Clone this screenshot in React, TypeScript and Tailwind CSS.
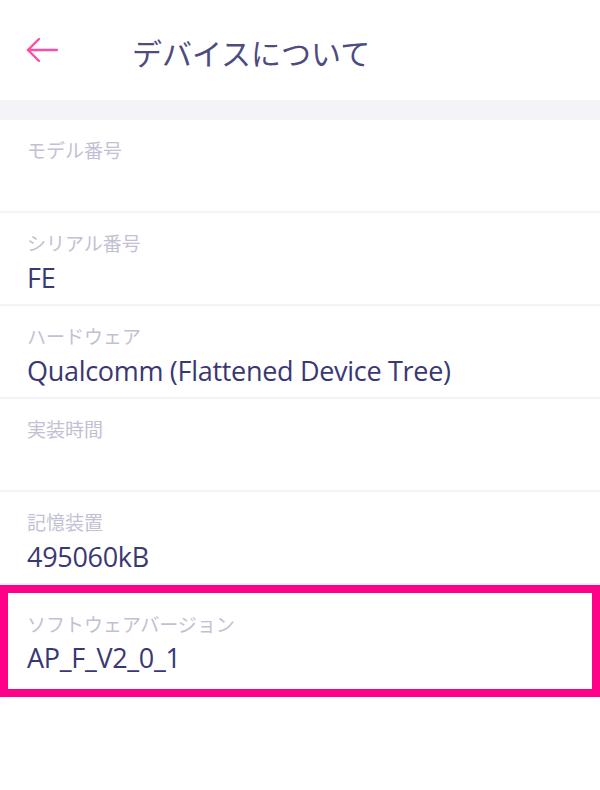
const rows = [
  { label: "モデル番号", value: "" },
  { label: "シリアル番号", value: "FE" },
  { label: "ハードウェア", value: "Qualcomm (Flattened Device Tree)" },
  { label: "実装時間", value: "" },
  { label: "記憶装置", value: "495060kB" },
];

const jp = { fontFamily: '"Noto Sans CJK JP", "Noto Sans", sans-serif' };
const latin = { fontFamily: '"Open Sans", "Noto Sans CJK JP", sans-serif' };

const Row = ({ label, value }: { label: string; value: string }) => (
  <div className="px-[27px] pt-[18px]">
    <div className="text-[19px] leading-6 text-[#c2c1d3]" style={jp}>
      {label}
    </div>
    <div className="mt-[7px] h-8 text-[27px] leading-8 font-medium text-[#3a3873] tracking-[-0.3px]" style={latin}>
      {value}
    </div>
  </div>
);

export default function App() {
  return (
    <div className="w-[600px] h-[790px] bg-white overflow-hidden">
      <header className="h-[100px] flex items-center">
        <div className="w-[132px] pl-[26px] flex items-center">
          <svg width="32" height="28" viewBox="0 0 32 28" fill="none" stroke="#ff4da6" strokeWidth="2.4" strokeLinecap="round" strokeLinejoin="round">
            <path d="M2 14H31" />
            <path d="M13 3L2 14L13 25" />
          </svg>
        </div>
        <h1 className="text-[30px] leading-9 font-normal text-[#4d4b80] mt-1" style={jp}>
          デバイスについて
        </h1>
      </header>

      <div className="h-5 bg-[#f4f3f8]" />

      {rows.map((r) => (
        <div key={r.label} className="h-[93px] border-b-2 border-[#f4f4f8]">
          <Row label={r.label} value={r.value} />
        </div>
      ))}

      <div className="h-[112px] border-[8px] border-[#ff0088]">
        <div className="px-[19px] pt-[19px]">
          <div className="text-[19px] leading-6 text-[#c2c1d3]" style={jp}>
            ソフトウェアバージョン
          </div>
          <div className="mt-[6px] text-[27px] leading-8 font-medium text-[#3a3873] tracking-[-0.3px]" style={latin}>
            AP_F_V2_0_1
          </div>
        </div>
      </div>
    </div>
  );
}
